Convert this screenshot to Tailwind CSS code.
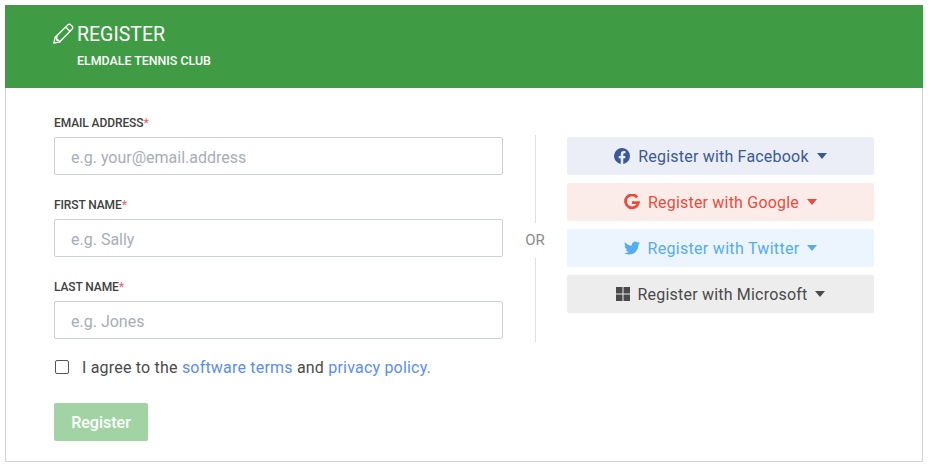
<!DOCTYPE html>
<html lang="en">
<head>
    <meta charset="UTF-8" />
    <meta name="viewport" content="width=device-width, initial-scale=1.0" />
    <title>Register</title>
    <script src="https://cdn.jsdelivr.net/npm/@tailwindcss/browser@4"></script>
</head>
<body class="bg-white font-['Roboto',sans-serif] text-[#4a4a4a] overflow-hidden">
    <div class="w-[918px] ml-[5px] mt-[5px]">
        <!-- header -->
        <div class="h-[83px] bg-[#3f9c45] text-white pl-[47px] pt-[17px]">
            <div class="flex items-center h-6">
                <svg class="w-[22px] h-[22px] mr-[3px]" viewBox="0 0 24 24" fill="none" stroke="currentColor" stroke-width="1.4" stroke-linejoin="round" stroke-linecap="round">
                    <path d="M2 22l1.500-6.500L17.500 2c1-.9 2.200-.9 3 0l1.500 1.500c.9.9.9 2 0 3L8.500 20.500z"/>
                    <path d="M3.500 15.500l5 5M15 4.500l4.500 4.500M5.500 14l-.5 4.500 1 .5"/>
                </svg>
                <h1 class="text-[19.500px] leading-6 font-normal pt-[2px]">REGISTER</h1>
            </div>
            <p class="ml-[25px] mt-[8px] text-[12.400px] leading-[14px] font-medium">ELMDALE TENNIS CLUB</p>
        </div>
        <!-- body -->
        <div class="h-[374px] border border-t-0 border-[#cfd2d8] pl-[48px] pt-[28px]">
            <div class="flex">
                <form class="w-[449px] flex flex-col">
                    <label class="text-[12px] tracking-[-0.1px] leading-[14px] font-medium text-[#404040]">EMAIL ADDRESS<span class="text-[#e86a6a]">*</span></label>
                    <input type="text" placeholder="e.g. your@email.address" class="mt-[7px] h-[38px] border border-[#ccd0d8] rounded-[2px] px-4 pt-[2px] text-[16px] placeholder:text-[#a8adb8] outline-none" />
                    <label class="mt-[23px] text-[12px] tracking-[-0.1px] leading-[14px] font-medium text-[#404040]">FIRST NAME<span class="text-[#e86a6a]">*</span></label>
                    <input type="text" placeholder="e.g. Sally" class="mt-[7px] h-[38px] border border-[#ccd0d8] rounded-[2px] px-4 pt-[2px] text-[16px] placeholder:text-[#a8adb8] outline-none" />
                    <label class="mt-[23px] text-[12px] tracking-[-0.1px] leading-[14px] font-medium text-[#404040]">LAST NAME<span class="text-[#e86a6a]">*</span></label>
                    <input type="text" placeholder="e.g. Jones" class="mt-[7px] h-[38px] border border-[#ccd0d8] rounded-[2px] px-4 pt-[2px] text-[16px] placeholder:text-[#a8adb8] outline-none" />
                </form>
                <!-- divider -->
                <div class="w-[64px] mt-[19px] h-[207px] flex flex-col items-center">
                    <div class="w-px flex-1 bg-[#dfdfdf]"></div>
                    <div class="h-[35px] flex items-center text-[15px] text-[#8a8a8a]">OR</div>
                    <div class="w-px h-[84px] bg-[#dfdfdf]"></div>
                </div>
                <!-- social -->
                <div class="w-[307px] mt-[21px] flex flex-col gap-2 text-[16px] tracking-[0.2px]">
                    <button class="h-[38px] rounded-[2px] bg-[#ebeef6] text-[#3b5998] flex items-center justify-center">
                        <svg class="w-4 h-4 mr-2" viewBox="0 0 16 16" fill="currentColor"><path d="M16 8a8 8 0 1 0-9.250 7.900v-5.600H4.700V8h2.050V6.240c0-2 1.200-3.120 3-3.120.88 0 1.800.160 1.800.160v2h-1c-1 0-1.300.620-1.300 1.250V8h2.220l-.36 2.300H9.250v5.600A8 8 0 0 0 16 8z"/></svg>
                        <span class="pt-[2px]">Register with Facebook</span>
                        <svg class="w-[10px] h-[6px] ml-[8px]" viewBox="0 0 10 6" fill="currentColor"><path d="M0 0h10L5 6z"/></svg>
                    </button>
                    <button class="h-[38px] rounded-[2px] bg-[#fcece9] text-[#e84c3d] flex items-center justify-center">
                        <svg class="w-4 h-4 mr-2" viewBox="0 0 16 16" fill="none" stroke="currentColor" stroke-width="2.800"><path d="M13.200 3.300A6.500 6.500 0 1 0 14.400 8.700H8"/></svg>
                        <span class="pt-[2px]">Register with Google</span>
                        <svg class="w-[10px] h-[6px] ml-[8px]" viewBox="0 0 10 6" fill="currentColor"><path d="M0 0h10L5 6z"/></svg>
                    </button>
                    <button class="h-[38px] rounded-[2px] bg-[#ecf5fd] text-[#55acee] flex items-center justify-center">
                        <svg class="w-4 h-4 mr-2" viewBox="0 0 24 24" fill="currentColor"><path d="M24 4.600a9.800 9.800 0 0 1-2.800.8 4.900 4.900 0 0 0 2.150-2.700 9.800 9.800 0 0 1-3.100 1.180 4.900 4.900 0 0 0-8.400 4.470A13.900 13.900 0 0 1 1.670 3.200a4.900 4.900 0 0 0 1.520 6.570 4.900 4.900 0 0 1-2.230-.6v.06a4.900 4.900 0 0 0 3.950 4.830 4.900 4.900 0 0 1-2.220.08 4.900 4.900 0 0 0 4.600 3.420A9.900 9.900 0 0 1 0 19.600a13.900 13.900 0 0 0 7.550 2.200c9.050 0 14-7.500 14-14v-.64A10 10 0 0 0 24 4.600z"/></svg>
                        <span class="pt-[2px] tracking-[0.3px]">Register with Twitter</span>
                        <svg class="w-[10px] h-[6px] ml-[8px]" viewBox="0 0 10 6" fill="currentColor"><path d="M0 0h10L5 6z"/></svg>
                    </button>
                    <button class="h-[38px] rounded-[2px] bg-[#ededed] text-[#4a4a4a] flex items-center justify-center">
                        <svg class="w-[14px] h-[14px] mr-2" viewBox="0 0 14 14" fill="currentColor"><path d="M0 0h6.500v6.500H0zM7.500 0H14v6.500H7.500zM0 7.500h6.500V14H0zM7.500 7.500H14V14H7.500z"/></svg>
                        <span class="pt-[2px]">Register with Microsoft</span>
                        <svg class="w-[10px] h-[6px] ml-[8px]" viewBox="0 0 10 6" fill="currentColor"><path d="M0 0h10L5 6z"/></svg>
                    </button>
                </div>
            </div>
            <!-- terms -->
            <label class="mt-[16px] flex items-center h-[18px] text-[16px] tracking-[0.2px]">
                <span class="ml-px w-[14px] h-[14px] border border-[#555] rounded-[2px]"></span>
                <span class="ml-[13px] pt-[2px]">I agree to the <a class="text-[#5b8def]">software terms</a> and <a class="text-[#5b8def]">privacy policy.</a></span>
            </label>
            <button class="mt-[27px] w-[94px] h-[38px] rounded-[2px] pt-[2px] bg-[#a2d3a4] text-white text-[16px] font-medium">Register</button>
        </div>
    </div>
</body>
</html>
